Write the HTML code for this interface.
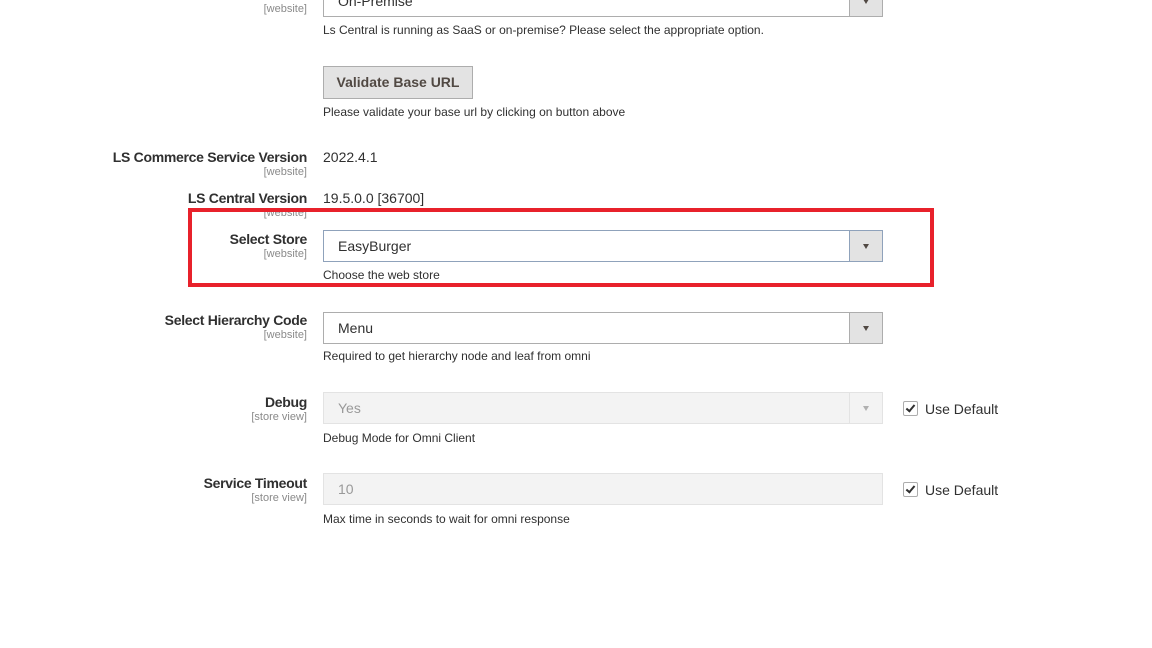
<!DOCTYPE html>
<html><head><meta charset="utf-8"><style>
body{margin:0;width:1152px;height:648px;background:#fff;position:relative;overflow:hidden;font-family:"Liberation Sans",sans-serif;color:#303030}
.a{position:absolute;white-space:nowrap}
.lbl{position:absolute;right:845px;font-size:14px;font-weight:bold;text-align:right;line-height:16px;letter-spacing:-0.3px}
.sc{position:absolute;right:845px;font-size:11px;color:#8a8a8a;line-height:12px}
.note{position:absolute;left:323px;font-size:12px;line-height:14px;white-space:nowrap}
.sel{position:absolute;left:323px;width:558px;height:30px;border:1px solid #adadad;background:#fff;box-sizing:content-box}
.sel span{position:absolute;left:14px;top:7px;font-size:14px}
.sel .ar{position:absolute;right:0;top:0;width:32px;height:30px;background:#e3e3e3;border-left:1px solid #adadad}
.ar:after{content:"";position:absolute;left:13px;top:13px;border-left:3.5px solid transparent;border-right:3.5px solid transparent;border-top:5px solid #514943}
.dis{background:#f3f3f3;border-color:#e3e3e3}
.dis span{color:#999}
.dis .ar{background:#f3f3f3;border-left-color:#e3e3e3}
.dis .ar:after{border-top-color:#b0b0b0}
.cb{position:absolute;left:903px;width:13px;height:13px;border:1px solid #adadad;background:#fff;border-radius:2px}
.cb:after{content:"";position:absolute;left:4px;top:1px;width:3px;height:7px;border:solid #303030;border-width:0 2px 2px 0;transform:rotate(40deg)}
.ud{position:absolute;left:925px;font-size:14px}
</style></head><body>
<div class="sel" style="top:-15px"><span>On-Premise</span><div class="ar"></div></div>
<div class="sc" style="top:3px">[website]</div>
<div class="note" style="top:23px">Ls Central is running as SaaS or on-premise? Please select the appropriate option.</div>
<div class="a" style="left:323px;top:66px;width:148px;height:31px;background:#e3e3e3;border:1px solid #adadad;font-size:14px;font-weight:bold;color:#514943;line-height:31px;text-align:center">Validate Base URL</div>
<div class="note" style="top:105px">Please validate your base url by clicking on button above</div>

<div class="lbl" style="top:149px">LS Commerce Service Version</div>
<div class="sc" style="top:166px">[website]</div>
<div class="a" style="left:323px;top:149px;font-size:14px">2022.4.1</div>

<div class="lbl" style="top:190px">LS Central Version</div>
<div class="sc" style="top:207px">[website]</div>
<div class="a" style="left:323px;top:190px;font-size:14px">19.5.0.0 [36700]</div>

<div class="a" style="left:188px;top:208px;width:738px;height:71px;border:4px solid #e8212b"></div>
<div class="lbl" style="top:231px">Select Store</div>
<div class="sc" style="top:248px">[website]</div>
<div class="sel" style="top:230px;border-color:#8fa2bb"><span>EasyBurger</span><div class="ar" style="border-left-color:#8fa2bb"></div></div>
<div class="note" style="top:268px">Choose the web store</div>

<div class="lbl" style="top:312px">Select Hierarchy Code</div>
<div class="sc" style="top:329px">[website]</div>
<div class="sel" style="top:312px"><span>Menu</span><div class="ar"></div></div>
<div class="note" style="top:349px">Required to get hierarchy node and leaf from omni</div>

<div class="lbl" style="top:394px">Debug</div>
<div class="sc" style="top:411px">[store view]</div>
<div class="sel dis" style="top:392px"><span>Yes</span><div class="ar"></div></div>
<div class="cb" style="top:401px"></div><div class="ud" style="top:401px">Use Default</div>
<div class="note" style="top:431px">Debug Mode for Omni Client</div>

<div class="lbl" style="top:475px">Service Timeout</div>
<div class="sc" style="top:492px">[store view]</div>
<div class="sel dis" style="top:473px"><span>10</span></div>
<div class="cb" style="top:482px"></div><div class="ud" style="top:482px">Use Default</div>
<div class="note" style="top:512px">Max time in seconds to wait for omni response</div>
</body></html>
